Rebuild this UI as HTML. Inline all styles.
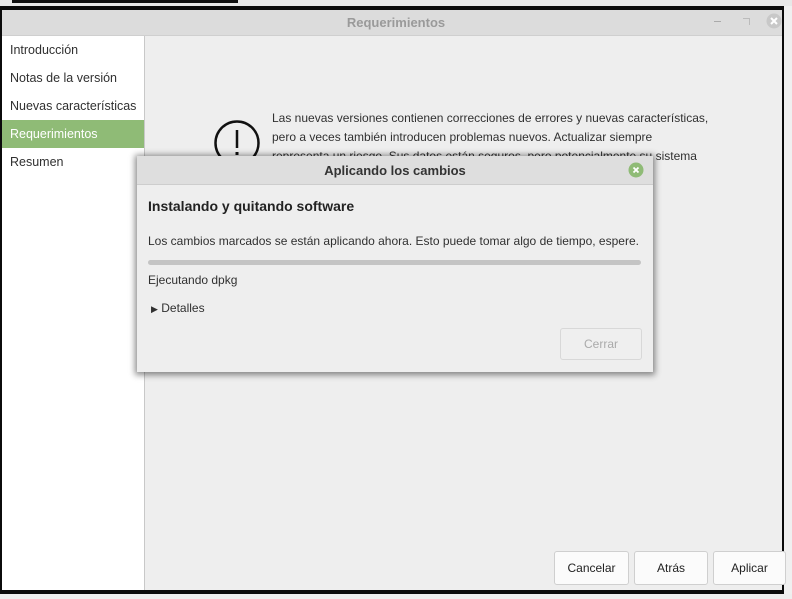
<!DOCTYPE html>
<html><head><meta charset="utf-8"><style>
body{margin:0;width:792px;height:599px;background:#f0f0f0;position:relative;overflow:hidden;font-family:"Liberation Sans","DejaVu Sans",sans-serif;font-size:12px;color:#303030}
.abs{position:absolute}
</style></head><body>
<div class="abs" style="left:0;top:0;width:792px;height:6px;background:#e8e8e8"></div>
<div class="abs" style="left:12px;top:0;width:226px;height:3px;background:#111"></div>
<div class="abs" style="left:0;top:6px;width:784px;height:588px;background:#0b0b0b"></div>
<div class="abs" style="left:2px;top:10px;width:780px;height:580px;background:#eeeeee"></div>
<div class="abs" style="left:2px;top:10px;width:780px;height:25px;background:#dcdcdc;border-bottom:1px solid #cfcfcf"></div>
<div class="abs" style="left:0;top:15px;width:792px;text-align:center;font-weight:bold;color:#9a9a9a;font-size:13px">Requerimientos</div>
<div class="abs" style="left:714px;top:21px;width:7px;height:1px;background:#aaa"></div>
<div class="abs" style="left:743px;top:18px;width:6px;height:6px;border:1px solid #bbb;border-width:1px 1px 0 0"></div>
<svg class="abs" style="left:766px;top:13px" width="16" height="16"><circle cx="8" cy="8" r="7.5" fill="#c8c8c8"/><path d="M5 5L11 11M11 5L5 11" stroke="#fff" stroke-width="2"/></svg>
<div class="abs" style="left:2px;top:36px;width:142px;height:554px;background:#fff;border-right:1px solid #c8c8c8"></div>
<div class="abs" style="left:10px;top:36px;line-height:28px;color:#303030;font-size:12.5px">Introducción<br>Notas de la versión<br>Nuevas características</div>
<div class="abs" style="left:2px;top:120px;width:142px;height:28px;background:#8fbb76"></div>
<div class="abs" style="left:10px;top:120px;line-height:28px;color:#fff;font-size:12.5px">Requerimientos</div>
<div class="abs" style="left:10px;top:148px;line-height:28px;font-size:12.5px">Resumen</div>
<svg class="abs" style="left:212px;top:118px" width="50" height="50"><circle cx="25" cy="25" r="21.5" fill="none" stroke="#111" stroke-width="2.5"/><path d="M25 12V30" stroke="#111" stroke-width="2.5"/><rect x="23.5" y="34" width="3" height="3" fill="#111"/></svg>
<div class="abs" style="left:272px;top:109px;line-height:19px;color:#303030">Las nuevas versiones contienen correcciones de errores y nuevas características,<br>pero a veces también introducen problemas nuevos. Actualizar siempre<br>representa un riesgo. Sus datos están seguros, pero potencialmente su sistema</div>
<div class="abs" style="left:137px;top:156px;width:516px;height:216px;background:#eeeeee;box-shadow:0 1px 6px 2px rgba(0,0,0,.45)"></div>
<div class="abs" style="left:137px;top:156px;width:516px;height:28px;background:#dedede;border-bottom:1px solid #cdcdcd"></div>
<div class="abs" style="left:137px;top:163px;width:516px;text-align:center;font-weight:bold;color:#333;font-size:13px">Aplicando los cambios</div>
<svg class="abs" style="left:628px;top:162px" width="16" height="16"><circle cx="8" cy="8" r="7.5" fill="#8fbb76"/><path d="M5.5 5.5L10.5 10.5M10.5 5.5L5.5 10.5" stroke="#fff" stroke-width="1.8"/></svg>
<div class="abs" style="left:148px;top:198px;font-weight:bold;font-size:14px;color:#222">Instalando y quitando software</div>
<div class="abs" style="left:148px;top:234px">Los cambios marcados se están aplicando ahora. Esto puede tomar algo de tiempo, espere.</div>
<div class="abs" style="left:148px;top:260px;width:493px;height:5px;background:#c4c4c4;border-radius:3px"></div>
<div class="abs" style="left:148px;top:273px">Ejecutando dpkg</div>
<div class="abs" style="left:151px;top:301px"><span style="font-size:9px">▶</span> Detalles</div>
<div class="abs" style="left:560px;top:328px;width:80px;height:30px;border:1px solid #d8d8d8;border-radius:3px;background:#efefef;text-align:center;line-height:30px;color:#aaa">Cerrar</div>
<div class="abs" style="left:554px;top:551px;width:73px;height:32px;border:1px solid #cfcfcf;border-radius:3px;background:#fbfbfb;text-align:center;line-height:32px;color:#222">Cancelar</div>
<div class="abs" style="left:634px;top:551px;width:72px;height:32px;border:1px solid #cfcfcf;border-radius:3px;background:#fbfbfb;text-align:center;line-height:32px;color:#222">Atrás</div>
<div class="abs" style="left:713px;top:551px;width:71px;height:32px;border:1px solid #cfcfcf;border-radius:3px;background:#fbfbfb;text-align:center;line-height:32px;color:#222">Aplicar</div>
<div class="abs" style="left:0;top:594px;width:792px;height:5px;background:#eee"></div>
</body></html>
